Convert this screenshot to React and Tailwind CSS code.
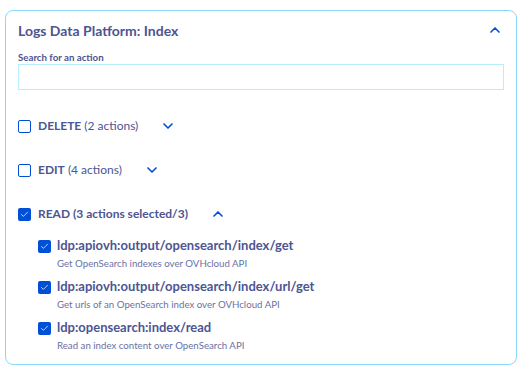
import { ChevronDown, ChevronUp, Check } from "lucide-react";

const font = { fontFamily: "Lato, 'Liberation Sans', sans-serif" };

const groups = [
  { name: "DELETE", note: "(2 actions)", checked: false, open: false },
  { name: "EDIT", note: "(4 actions)", checked: false, open: false },
  { name: "READ", note: "(3 actions selected/3)", checked: true, open: true },
];

const actions = [
  { id: "ldp:apiovh:output/opensearch/index/get", desc: "Get OpenSearch indexes over OVHcloud API" },
  { id: "ldp:apiovh:output/opensearch/index/url/get", desc: "Get urls of an OpenSearch index over OVHcloud API" },
  { id: "ldp:opensearch:index/read", desc: "Read an index content over OpenSearch API" },
];

function Box({ checked }) {
  return checked ? (
    <span className="w-[13px] h-[13px] rounded-[2px] bg-[#0050d7] flex items-center justify-center shrink-0">
      <Check size={9} strokeWidth={2} className="text-white" />
    </span>
  ) : (
    <span className="w-[13px] h-[13px] rounded-[2px] border-[1.5px] border-[#0050d7] bg-white shrink-0" />
  );
}

export default function App() {
  return (
    <div className="w-[532px] h-[378px] bg-white pt-[10px] pl-[5px]" style={font}>
      <div className="w-[512px] h-[355px] border-[1.5px] border-[#86dafc] rounded-[8px] px-[12px] pt-[7px]">
        <div className="flex items-center justify-between h-[24px]">
          <h2 className="text-[14px] font-bold text-[#4d5592]">Logs Data Platform: Index</h2>
          <ChevronUp size={16} strokeWidth={2.5} className="text-[#0050d7] mr-[1px]" />
        </div>
        <label className="block text-[9.7px] leading-[14px] font-bold text-[#4d5592] mt-[8px]">Search for an action</label>
        <div className="h-[26px] w-[486px] border-[1.5px] border-[#b8edfe]" />

        <div className="mt-[27px] flex flex-col gap-[26px]">
          {groups.map((g) => (
            <div key={g.name} className="flex items-center h-[18px]">
              <Box checked={g.checked} />
              <span className={`ml-[7px] text-[12px] text-[#4d5592] ${g.checked ? "font-bold" : ""}`}>
                <span className="font-bold">{g.name}</span> {g.note}
              </span>
              {g.open ? (
                <ChevronUp size={16} strokeWidth={2.5} className="text-[#0050d7] ml-[22px]" />
              ) : (
                <ChevronDown size={16} strokeWidth={2.5} className="text-[#0050d7] ml-[22px]" />
              )}
            </div>
          ))}
        </div>

        <div className="mt-[14px] pl-[20px] flex flex-col gap-[8px]">
          {actions.map((a) => (
            <div key={a.id}>
              <div className="flex items-center h-[18px]">
                <Box checked />
                <span className="ml-[6px] text-[13px] font-bold text-[#4d5592]">{a.id}</span>
              </div>
              <div className="ml-[19px] text-[9.7px] text-[#6b71a3] leading-[14px] mt-[1px]">{a.desc}</div>
            </div>
          ))}
        </div>
      </div>
    </div>
  );
}
